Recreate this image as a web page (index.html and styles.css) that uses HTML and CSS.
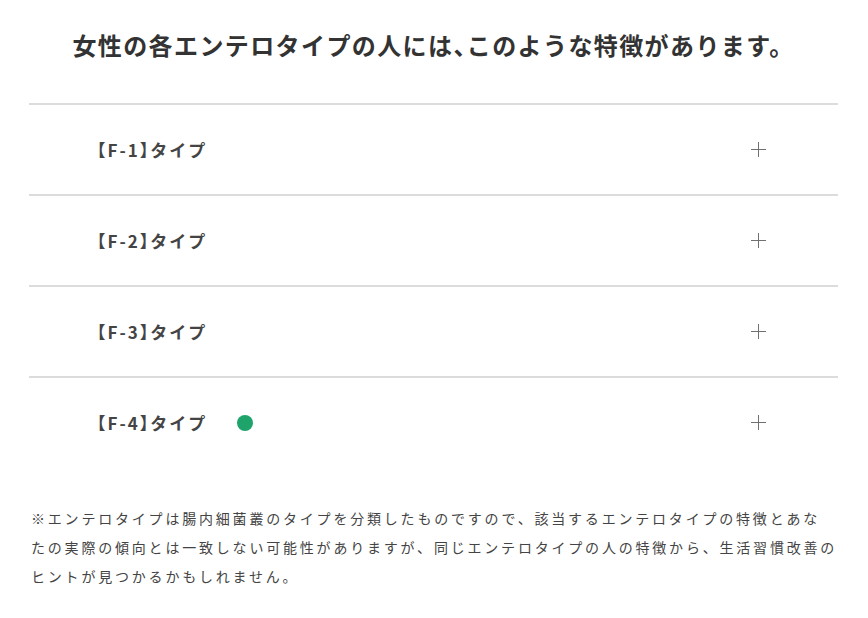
FILE: index.html
```html
<!DOCTYPE html>
<html lang="ja">
<head>
<meta charset="utf-8">
<link rel="stylesheet" href="styles.css">
</head>
<body>
<main class="wrap">
  <h2 class="title">女性の各エンテロタイプの人には<span class="narrow">、</span>このような特徴があります。</h2>
  <ul class="acc">
    <li class="row"><span class="label"><span class="narrow">【</span>F-1<span class="narrow">】</span>タイプ</span><span class="plus"></span></li>
    <li class="row"><span class="label"><span class="narrow">【</span>F-2<span class="narrow">】</span>タイプ</span><span class="plus"></span></li>
    <li class="row"><span class="label"><span class="narrow">【</span>F-3<span class="narrow">】</span>タイプ</span><span class="plus"></span></li>
    <li class="row"><span class="label"><span class="narrow">【</span>F-4<span class="narrow">】</span>タイプ<span class="dot"></span></span><span class="plus"></span></li>
  </ul>
  <p class="note">※エンテロタイプは腸内細菌叢のタイプを分類したものですので、該当するエンテロタイプの特徴とあな<br>たの実際の傾向とは一致しない可能性がありますが、同じエンテロタイプの人の特徴から、生活習慣改善の<br>ヒントが見つかるかもしれません。</p>
</main>
</body>
</html>
```
FILE: styles.css
```css
html, body {
  margin: 0;
  padding: 0;
  background: #fff;
}
body {
  font-family: "Noto Sans CJK JP", "Noto Sans", sans-serif;
  color: #333;
}
.wrap {
  margin: 0 30px 0 29px;
}
.title {
  margin: 0;
  padding-top: 27px;
  font-size: 24px;
  line-height: 36px;
  font-weight: 700;
  text-align: center;
  letter-spacing: 1.4px;
  color: #333;
}
.narrow {
  font-feature-settings: "halt";
}
.acc {
  list-style: none;
  margin: 40px 0 0;
  padding: 0;
}
.row {
  display: flex;
  align-items: center;
  justify-content: space-between;
  height: 89px;
  border-top: 2px solid #dcdcdc;
  padding: 0 72px 0 68px;
}
.label {
  display: flex;
  align-items: center;
  font-size: 17px;
  font-weight: 700;
  color: #444;
  letter-spacing: 2px;
}
.dot {
  width: 16px;
  height: 16px;
  border-radius: 50%;
  background: #1ea46a;
  margin-left: 30px;
}
.plus {
  position: relative;
  width: 15px;
  height: 15px;
}
.plus::before, .plus::after {
  content: "";
  position: absolute;
  background: #707070;
}
.plus::before {
  left: 0;
  right: 0;
  top: 7px;
  height: 1px;
}
.plus::after {
  top: 0;
  bottom: 0;
  left: 7px;
  width: 1px;
}
.note {
  margin: 37px 0 0 2px;
  font-size: 14px;
  line-height: 29px;
  letter-spacing: 2.8px;
  color: #444;
  white-space: nowrap;
}
```
